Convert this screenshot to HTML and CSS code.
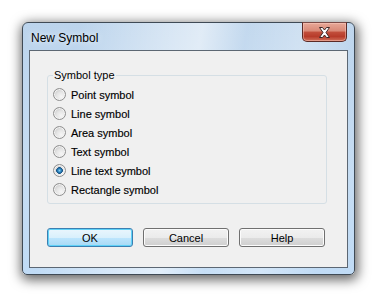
FILE: index.html
```html
<!DOCTYPE html>
<html lang="en">
<head>
    <meta charset="UTF-8">
    <meta name="viewport" content="width=device-width, initial-scale=1.0">
    <title>New Symbol</title>
    <link rel="stylesheet" href="styles.css">
</head>
<body>
    <div class="window">
        <div class="titlebar">
            <span class="title">New Symbol</span>
            <button class="close" type="button" aria-label="Close">
                <svg width="15" height="13" viewBox="0 0 15 13">
                    <path d="M2.5 1.5 H5.5 L7.5 4 L9.5 1.5 H12.5 L9 6.5 L12.5 11.5 H9.5 L7.5 9 L5.5 11.5 H2.5 L6 6.5 Z" fill="#fff" stroke="#3b2626" stroke-width="1" stroke-linejoin="round"/>
                </svg>
            </button>
        </div>
        <div class="client">
            <fieldset class="group">
                <legend>Symbol type</legend>
                <label class="option"><input type="radio" name="symbol_type">Point symbol</label>
                <label class="option"><input type="radio" name="symbol_type">Line symbol</label>
                <label class="option"><input type="radio" name="symbol_type">Area symbol</label>
                <label class="option"><input type="radio" name="symbol_type">Text symbol</label>
                <label class="option"><input type="radio" name="symbol_type" checked>Line text symbol</label>
                <label class="option"><input type="radio" name="symbol_type">Rectangle symbol</label>
            </fieldset>
            <div class="buttons">
                <button type="submit" class="btn btn-default">OK</button>
                <button type="button" class="btn">Cancel</button>
                <button type="button" class="btn">Help</button>
            </div>
        </div>
    </div>
</body>
</html>
```

FILE: styles.css
```css
:root {
    --client-bg: #f0f0f0;
    --group-border: #d5dfe5;
}

body {
    margin: 0;
    padding: 22px;
    background-color: #fff;
    font-family: 'Liberation Sans', Arial, sans-serif;
    font-size: 11px;
    color: #000;
}

.window {
    width: 333px;
    height: 253px;
    box-sizing: border-box;
    padding: 0 6px 6px 6px;
    border: 1px solid #3f4a55;
    border-radius: 6px 6px 5px 5px;
    background:
        linear-gradient(100deg, rgba(255,255,255,0) 15%, rgba(255,255,255,0.35) 35%, rgba(255,255,255,0.55) 48%, rgba(255,255,255,0.1) 60%, rgba(255,255,255,0.3) 75%, rgba(255,255,255,0) 90%),
        linear-gradient(to bottom, #bcd4ec, #c6ddf3 60%, #c0dbf5);
    box-shadow: 1px 3px 12px 2px rgba(0, 0, 0, 0.6);
}

.titlebar {
    height: 27px;
    display: flex;
    justify-content: space-between;
    align-items: flex-start;
}

.title {
    font-size: 12px;
    line-height: 14px;
    margin: 8px 0 0 2px;
    text-shadow: 0 0 6px rgba(255, 255, 255, 0.9);
}

.close {
    width: 45px;
    height: 20px;
    margin: -1px 1px 0 0;
    padding: 0;
    border: 1px solid #5b2a26;
    border-top-color: #7a4a46;
    border-radius: 0 0 5px 5px;
    background: linear-gradient(to bottom, #e8a898 0%, #d98876 45%, #c24f3c 50%, #b73b2a 75%, #d0705a 100%);
    box-shadow: inset 0 0 0 1px rgba(255, 210, 200, 0.45);
    display: flex;
    justify-content: center;
    align-items: center;
}

.client {
    height: 218px;
    box-sizing: border-box;
    border: 1px solid #5c6773;
    background-color: var(--client-bg);
    padding: 18px 0 0 17px;
}

.group {
    width: 280px;
    box-sizing: border-box;
    margin: 0;
    padding: 3px 6px 4px 5px;
    border: 1px solid var(--group-border);
    border-radius: 3px;
}

.group legend {
    padding: 0 1px;
    line-height: 13px;
}

.option {
    display: flex;
    align-items: center;
    height: 19px;
    -webkit-text-stroke: 0.15px #000;
}

.option input {
    appearance: none;
    -webkit-appearance: none;
    width: 13px;
    height: 13px;
    margin: 0 5px 0 0;
    border: 1px solid #8f8f8f;
    border-radius: 50%;
    box-sizing: border-box;
    background: radial-gradient(circle at 65% 70%, #f6f6f6 0%, #e4e4e4 45%, #c9c9c9 80%);
    box-shadow: inset 0 0 0 1px #f4f4f4;
}

.option input:checked {
    background:
        radial-gradient(circle 3.6px at 50% 50%, #8ccff2 0%, #2f8ac4 45%, #134f82 85%, rgba(19, 79, 130, 0) 100%),
        radial-gradient(circle at 65% 70%, #f6f6f6 0%, #e4e4e4 45%, #c9c9c9 80%);
}

.buttons {
    display: flex;
    gap: 10px;
    margin-top: 24px;
}

.btn {
    width: 86px;
    height: 19px;
    padding: 0;
    font-family: inherit;
    font-size: 11px;
    color: #000;
    border: 1px solid #707070;
    border-radius: 3px;
    background: linear-gradient(to bottom, #f2f2f2 0%, #ebebeb 50%, #dddddd 51%, #cfcfcf 100%);
    box-shadow: inset 0 0 0 1px #fcfcfc;
}

.btn-default {
    border-color: #3c7fb1;
    background: linear-gradient(to bottom, #eaf6fd 0%, #d9f0fc 50%, #bee6fd 51%, #a7d9f5 100%);
    box-shadow: inset 0 0 0 1px #5fd2f8;
}
```
